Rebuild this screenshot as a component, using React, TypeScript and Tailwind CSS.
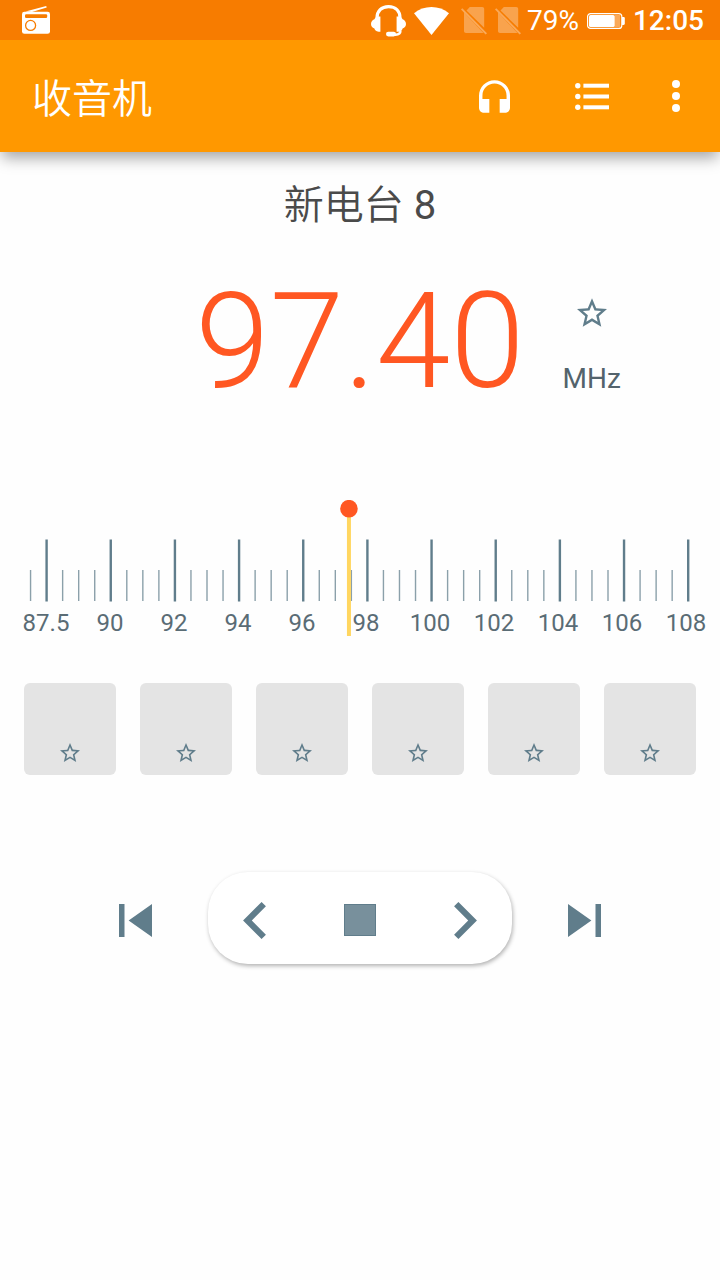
import React, { useState } from 'react';

interface IconProps {
  className?: string;
}

const RadioIcon: React.FC<IconProps> = ({ className }) => (
  <svg viewBox="0 0 28 28" className={className} aria-hidden="true">
    <path d="M3.5 5.6L24.2 0l.5 1.4L10 5.9z" fill="#fff" />
    <rect x="0" y="5.8" width="28" height="22" rx="2.4" fill="#fff" />
    <rect x="3" y="8.2" width="22.2" height="3.8" rx="1.2" fill="#f77c00" />
    <circle cx="8.6" cy="19.4" r="5" fill="none" stroke="#f77c00" strokeWidth="1.3" />
  </svg>
);

const HeadsetMicIcon: React.FC<IconProps> = ({ className }) => (
  <svg viewBox="0 0 35 32" className={className} fill="#fff" aria-hidden="true">
    <path d="M6 13C6 6 10.5 1.600 17.5 1.600S29 6 29 13" fill="none" stroke="#fff" strokeWidth="3.2" />
    <path d="M9.400 11.500v15.200H7.600C5 26.500 3.600 24.700 3.400 23.600 1.200 22.800 0 21 0 19s1.200-3.900 3.400-4.700c.6-1.700 2.200-2.800 4-2.800z" />
    <path d="M25.600 11.500v15.200h1.800c2.600-.2 4-2 4.200-3.100 2.200-.8 3.400-2.600 3.400-4.600s-1.200-3.900-3.400-4.700c-.6-1.700-2.200-2.800-4-2.800z" />
    <path d="M29.500 25.500c0 2.800-1.500 4.200-5 4.200h-5" fill="none" stroke="#fff" strokeWidth="2.4" />
    <rect x="15" y="26.8" width="10" height="4.6" rx="2.3" />
  </svg>
);

const WifiIcon: React.FC<IconProps> = ({ className }) => (
  <svg viewBox="0 0 35 28" className={className} fill="#fff" aria-hidden="true">
    <path d="M0 6.200C5 2 11 0 17.500 0S30 2 35 6.200L17.500 28z" />
  </svg>
);

const NoSimIcon: React.FC<IconProps> = ({ className }) => (
  <svg viewBox="0 0 26 28" className={className} fill="#fff" fillOpacity="0.3" aria-hidden="true">
    <path d="M5.500 3.600L8.800 0h12.400c1.200 0 2 .8 2 2v18.800z" />
    <path d="M3 5.600L22.500 26H5c-1.200 0-2-.8-2-2z" />
    <path d="M0 2.600L1.300 1.300 26 26.200 24.600 27.600z" fillOpacity="0.35" />
  </svg>
);

const BatteryIcon: React.FC<IconProps> = ({ className }) => (
  <svg viewBox="0 0 38 16" className={className} aria-hidden="true">
    <rect x="0.6" y="0.6" width="34.2" height="14.8" rx="3" fill="none" stroke="#fff" strokeWidth="1.2" />
    <path d="M35 4h1.500c.8 0 1.300.5 1.300 1.200v5.600c0 .7-.5 1.200-1.300 1.200H35z" fill="#fff" />
    <path d="M27.500 2h5.700v12h-5.700z" fill="#fff" fillOpacity="0.35" />
    <rect x="2" y="2" width="25.700" height="12" rx="1.5" fill="#fff" />
  </svg>
);

const HeadphonesIcon: React.FC<IconProps> = ({ className }) => (
  <svg viewBox="3 1 18 19" className={className} fill="currentColor" aria-hidden="true">
    <path d="M12 1c-4.970 0-9 4.030-9 9v7c0 1.660 1.340 3 3 3h3v-8H5v-2c0-3.870 3.130-7 7-7s7 3.130 7 7v2h-4v8h3c1.660 0 3-1.340 3-3v-7c0-4.970-4.030-9-9-9z" />
  </svg>
);

const ListIcon: React.FC<IconProps> = ({ className }) => (
  <svg viewBox="0 0 34 27" className={className} fill="currentColor" aria-hidden="true">
    {[2.7, 13.5, 24.3].map(y => (
      <g key={y}>
        <circle cx="2.8" cy={y} r="2.7" />
        <rect x="8.4" y={y - 2} width="25.6" height="4" />
      </g>
    ))}
  </svg>
);

const MoreIcon: React.FC<IconProps> = ({ className }) => (
  <svg viewBox="0 0 8 32" className={className} fill="currentColor" aria-hidden="true">
    <circle cx="4" cy="4" r="4" />
    <circle cx="4" cy="16" r="4" />
    <circle cx="4" cy="28" r="4" />
  </svg>
);

const StarIcon: React.FC<IconProps> = ({ className }) => (
  <svg viewBox="2 2 20 19" className={className} fill="currentColor" aria-hidden="true">
    <path d="M22 9.240l-7.190-.62L12 2 9.190 8.630 2 9.240l5.460 4.730L5.820 21 12 17.270 18.180 21l-1.630-7.030L22 9.240zM12 15.400l-3.760 2.270 1-4.280-3.320-2.880 4.380-.38L12 6.100l1.710 4.040 4.380.38-3.320 2.880 1 4.280L12 15.400z" />
  </svg>
);

const SkipPreviousIcon: React.FC<IconProps> = ({ className }) => (
  <svg viewBox="6 6 12 12" className={className} fill="currentColor" aria-hidden="true">
    <path d="M6 6h2v12H6zm3.500 6l8.500 6V6z" />
  </svg>
);

const SkipNextIcon: React.FC<IconProps> = ({ className }) => (
  <svg viewBox="6 6 12 12" className={className} fill="currentColor" aria-hidden="true">
    <path d="M6 18l8.500-6L6 6v12zM16 6v12h2V6h-2z" />
  </svg>
);

const ChevronLeftIcon: React.FC<IconProps> = ({ className }) => (
  <svg viewBox="8 6 7.41 12" className={className} fill="currentColor" aria-hidden="true">
    <path d="M15.410 7.410L14 6l-6 6 6 6 1.410-1.410L10.830 12z" />
  </svg>
);

const ChevronRightIcon: React.FC<IconProps> = ({ className }) => (
  <svg viewBox="8.59 6 7.41 12" className={className} fill="currentColor" aria-hidden="true">
    <path d="M10 6L8.590 7.410 13.170 12l-4.580 4.590L10 18l6-6z" />
  </svg>
);

const dialLabels = ['87.5', '90', '92', '94', '96', '98', '100', '102', '104', '106', '108'];
const presets = [1, 2, 3, 4, 5, 6];

const DIAL_START = 46.6;
const DIAL_STEP = 16.04;

const StatusBar: React.FC = () => (
  <div className="relative z-10 flex h-10 items-center justify-between bg-[#f77c00] pl-[22px] pr-4 text-white">
    <RadioIcon className="h-7 w-7" />
    <div className="flex items-center pt-0.5 text-[28px] leading-10">
      <HeadsetMicIcon className="mr-2 h-8 w-[35px]" />
      <WifiIcon className="mr-3 h-7 w-[35px]" />
      <NoSimIcon className="mr-2 h-7 w-[26px]" />
      <NoSimIcon className="mr-1.5 h-7 w-[26px]" />
      <span className="mr-2">79%</span>
      <BatteryIcon className="mr-2 h-4 w-[38px]" />
      <span className="font-medium">12:05</span>
    </div>
  </div>
);

const Toolbar: React.FC = () => (
  <header className="flex h-28 items-center bg-[#ff9800] pl-8 pr-5 text-white shadow-[0_8px_14px_-2px_rgba(0,0,0,0.35)]">
    <h1 className="flex-1 pt-2 text-[40px] font-[350]">收音机</h1>
    <button type="button" aria-label="耳机" className="mr-[50px] flex h-12 w-12 items-center justify-center">
      <HeadphonesIcon className="h-[33px] w-[31px]" />
    </button>
    <button type="button" aria-label="电台列表" className="mr-9 flex h-12 w-12 items-center justify-center">
      <ListIcon className="h-[27px] w-[34px]" />
    </button>
    <button type="button" aria-label="更多选项" className="flex h-12 w-12 items-center justify-center">
      <MoreIcon className="h-8 w-2" />
    </button>
  </header>
);

interface DialProps {
  frequency: number;
  onChange: (value: number) => void;
}

const Dial: React.FC<DialProps> = ({ frequency, onChange }) => {
  // 88 sits on the first long tick, every short tick is half a megahertz
  const pointer = DIAL_START + ((frequency - 88) / 0.5) * DIAL_STEP + 0.8;

  return (
    <div className="relative">
      <svg viewBox="0 0 720 140" className="block w-full" aria-hidden="true">
        {Array.from({ length: 42 }, (_, i) => {
          const x = DIAL_START + (i - 1) * DIAL_STEP;
          const major = (i - 1) % 4 === 0;
          return (
            <line
              key={i}
              x1={x}
              x2={x}
              y1={major ? 39.5 : 70}
              y2={major ? 101.5 : 101}
              stroke={major ? '#607d8b' : '#8ba0aa'}
              strokeWidth={major ? 2.4 : 1.4}
            />
          );
        })}
        {dialLabels.map((label, i) => (
          <text key={label} x={46 + i * 64} y={131} textAnchor="middle" fontSize={24} fill="#5a6c75">
            {label}
          </text>
        ))}
        <line x1={pointer} x2={pointer} y1={9} y2={136} stroke="#ffd660" strokeWidth={4} />
        <circle cx={pointer} cy={8.7} r={8.8} fill="#ff5722" />
      </svg>
      <input
        type="range"
        aria-label="频率"
        min={87.5}
        max={108}
        step={0.1}
        value={frequency}
        onChange={e => onChange(Number(e.target.value))}
        className="absolute inset-0 h-full w-full cursor-pointer opacity-0"
      />
    </div>
  );
};

const App: React.FC = () => {
  const [frequency, setFrequency] = useState(97.4);
  const tune = (delta: number) =>
    setFrequency(value => Math.min(108, Math.max(87.5, Number((value + delta).toFixed(1)))));

  return (
    <div className="min-h-screen bg-[#fefefe] font-[Roboto,'Noto_Sans_CJK_SC',sans-serif]">
      <StatusBar />
      <Toolbar />

      <main>
        {/* Station */}
        <h2 className="pt-6 text-center text-[40px] leading-[60px] text-[#4a4a4a]">
          <span className="font-[350]">新电台</span> 8
        </h2>

        {/* Frequency */}
        <div className="mt-[22px] grid grid-cols-[1fr_auto_1fr] items-start">
          <div />
          <output className="text-[134px] font-light leading-[168px] text-[#ff5722]">{frequency.toFixed(2)}</output>
          <div className="ml-8 mt-10 flex w-[70px] flex-col items-center gap-9">
            <button type="button" aria-label="收藏" className="text-[#607d8b]">
              <StarIcon className="h-[29px] w-[30px]" />
            </button>
            <span className="text-[28px] leading-8 text-[#53636c]">MHz</span>
          </div>
        </div>

        {/* Tuning dial */}
        <div className="mt-[74px]">
          <Dial frequency={frequency} onChange={setFrequency} />
        </div>

        {/* Presets */}
        <div className="mt-[43px] grid grid-cols-6 gap-6 px-6">
          {presets.map(preset => (
            <button
              key={preset}
              type="button"
              aria-label={`预设 ${preset}`}
              className="flex aspect-square items-end justify-center rounded-md bg-[#e4e4e4] pb-[13px] text-[#607d8b]"
            >
              <StarIcon className="h-[19px] w-5" />
            </button>
          ))}
        </div>

        {/* Playback controls */}
        <div className="mt-[97px] flex items-center justify-center gap-14 text-[#607d8b]">
          <button type="button" aria-label="上一个电台" className="pt-1">
            <SkipPreviousIcon className="h-[33px] w-[33px]" />
          </button>
          <div className="flex h-[92px] w-[304px] items-center justify-between rounded-[40px] bg-white px-[35px] pt-1 shadow-[1px_2px_4px_rgba(0,0,0,0.3)]">
            <button type="button" aria-label="降低频率" onClick={() => tune(-0.1)}>
              <ChevronLeftIcon className="h-[37px] w-[23px]" />
            </button>
            <button type="button" aria-label="停止" className="h-8 w-8 border border-[#607d8b] bg-[#78909c]" />
            <button type="button" aria-label="提高频率" onClick={() => tune(0.1)}>
              <ChevronRightIcon className="h-[37px] w-[23px]" />
            </button>
          </div>
          <button type="button" aria-label="下一个电台" className="pt-1">
            <SkipNextIcon className="h-[33px] w-[33px]" />
          </button>
        </div>
      </main>
    </div>
  );
};

export default App;
